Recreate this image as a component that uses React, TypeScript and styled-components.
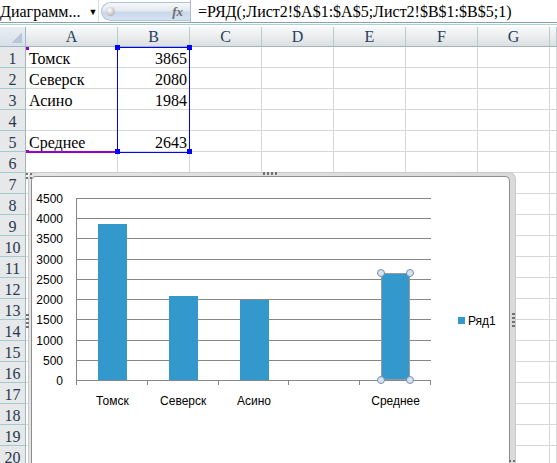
import styled, { createGlobalStyle } from 'styled-components';

const GlobalStyle = createGlobalStyle`
  html, body {
    margin: 0;
    padding: 0;
    background: #fff;
  }
  body {
    font-family: "Liberation Serif", "Times New Roman", serif;
    overflow: hidden;
  }
`;

const COLS = ['A', 'B', 'C', 'D', 'E', 'F', 'G'];
const ROWS = Array.from({ length: 20 }, (_, i) => i + 1);
const DATA: Record<number, [string, string]> = {
  1: ['Томск', '3865'],
  2: ['Северск', '2080'],
  3: ['Асино', '1984'],
  5: ['Среднее', '2643'],
};

const SERIES: { name: string; value: number | null }[] = [
  { name: 'Томск', value: 3865 },
  { name: 'Северск', value: 2080 },
  { name: 'Асино', value: 1984 },
  { name: '', value: null },
  { name: 'Среднее', value: 2643 },
];

// chart geometry, in page pixels
const X0 = 77;
const X1 = 431;
const Y0 = 380;
const YTOP = 198;
const MAX = 4500;
const BAR = 29;
const BLUE = '#3399cc';

export default function App() {
  return (
    <Root>
      <GlobalStyle />
      <FormulaBar>
        <NameBox>
          <span>Диаграмм...</span>
          <Arrow>▼</Arrow>
        </NameBox>
        <FxBox>
          <Knob />
          <Fx>fx</Fx>
        </FxBox>
        <Formula>=РЯД(;Лист2!$A$1:$A$5;Лист2!$B$1:$B$5;1)</Formula>
      </FormulaBar>
      <Divider />

      <Sheet>
        <Corner />
        {COLS.map((c) => (
          <ColHead key={c}>{c}</ColHead>
        ))}
        <ColHead />
        {ROWS.map((r) => (
          <Row key={r} r={r} />
        ))}
      </Sheet>

      {/* highlighted source ranges of the selected series */}
      <NameRange />
      <ValueRange />

      <ChartFrame>
        <ChartArea>
          <ColumnChart />
        </ChartArea>
        <SideGrip />
        <CornerGrip />
      </ChartFrame>
    </Root>
  );
}

function Row({ r }: { r: number }) {
  const d = DATA[r];
  return (
    <>
      <RowHead>{r}</RowHead>
      <Cell>{d ? d[0] : ''}</Cell>
      <Cell $right>{d ? d[1] : ''}</Cell>
      {COLS.slice(2).map((c) => (
        <Cell key={c} />
      ))}
      <Cell />
    </>
  );
}

function ColumnChart() {
  const y = (v: number) => Y0 - (v * (Y0 - YTOP)) / MAX;
  const cw = (X1 - X0) / SERIES.length;
  const ticks = Array.from({ length: 10 }, (_, i) => i * 500);
  const sel = SERIES[4].value as number;
  const selX = Math.round(X0 + 4.5 * cw - BAR / 2);
  const selTop = Math.round(y(sel));

  return (
    <ChartSvg>
      <g transform="translate(-32 -177)" fontFamily='"Liberation Sans", Arial, sans-serif' fontSize={12}>
        {ticks.map((v) => {
          const gy = Math.round(y(v)) + 0.5;
          return (
            <g key={v}>
              <line x1={X0} x2={X1} y1={gy} y2={gy} stroke="#868686" />
              <text x={63} y={gy + 4} textAnchor="end" fill="#000">
                {v}
              </text>
            </g>
          );
        })}
        <line x1={X0 - 0.5} x2={X0 - 0.5} y1={YTOP} y2={Y0 + 1} stroke="#868686" />
        {Array.from({ length: SERIES.length + 1 }, (_, i) => {
          const tx = Math.round(X0 + i * cw) - 0.5;
          return <line key={i} x1={tx} x2={tx} y1={Y0} y2={Y0 + 5} stroke="#868686" />;
        })}

        {SERIES.map((s, i) => {
          const cx = X0 + (i + 0.5) * cw;
          const bx = Math.round(cx - BAR / 2);
          return (
            <g key={i}>
              {s.value !== null && (
                <rect
                  x={bx}
                  y={Math.round(y(s.value))}
                  width={BAR}
                  height={Y0 - Math.round(y(s.value))}
                  fill={BLUE}
                />
              )}
              {s.name && (
                <text x={cx} y={405} textAnchor="middle" fill="#000">
                  {s.name}
                </text>
              )}
            </g>
          );
        })}

        {/* selected point: Среднее */}
        <rect x={selX + 0.5} y={selTop + 0.5} width={BAR - 1} height={Y0 - selTop - 1} fill="none" stroke="#9a9a9a" />
        {[
          [selX, selTop],
          [selX + BAR, selTop],
          [selX, Y0],
          [selX + BAR, Y0],
        ].map(([hx, hy], k) => (
          <circle key={k} cx={hx} cy={hy} r={3.5} fill="#d3e4ef" stroke="#7d8bb6" />
        ))}

        <rect x={458} y={317} width={7} height={7} fill={BLUE} />
        <text x={468} y={324.5} fill="#000">
          Ряд1
        </text>
      </g>
    </ChartSvg>
  );
}

const Root = styled.div`
  position: relative;
  width: 557px;
  height: 463px;
  overflow: hidden;
  background: #fff;
`;

const FormulaBar = styled.div`
  display: flex;
  height: 22px;
  border-bottom: 1px solid #7ea6ab;
  background: #fff;
  font-size: 16px;
  color: #000;
`;

const NameBox = styled.div`
  width: 99px;
  display: flex;
  align-items: flex-start;
  padding-top: 3px;
  line-height: 18px;
  box-sizing: border-box;
  border-right: 1px solid #d5dde6;
  white-space: nowrap;
  overflow: hidden;
`;

const Arrow = styled.span`
  margin-left: 8px;
  font-size: 9px;
  line-height: 18px;
  color: #000;
`;

const FxBox = styled.div`
  width: 89px;
  margin-left: 2px;
  margin-top: 2px;
  height: 19px;
  box-sizing: border-box;
  border: 1px solid #b3c3d6;
  border-right: none;
  border-radius: 10px 0 0 10px;
  background: linear-gradient(#f6f8fb 0%, #e4e9f0 45%, #c9d7ec 55%, #d7e3f3 100%);
  display: flex;
  align-items: center;
`;

const Knob = styled.div`
  width: 9px;
  height: 9px;
  margin-left: 4px;
  border-radius: 50%;
  background: radial-gradient(circle at 40% 35%, #ffffff 0%, #c4c4c4 60%, #9a9a9a 100%);
`;

const Fx = styled.span`
  margin-left: auto;
  margin-right: 7px;
  font-style: italic;
  font-weight: bold;
  font-size: 13px;
  color: #6d6d6d;
`;

const Formula = styled.div`
  flex: 1;
  border-left: 1px solid #a9bcd0;
  padding: 3px 0 0 7px;
  line-height: 18px;
  white-space: nowrap;
  overflow: hidden;
`;

const Divider = styled.div`
  height: 1px;
  border-top: 1px solid #fff;
  border-bottom: 2px solid #fff;
  background: #b2ced1;
`;

const Sheet = styled.div`
  display: grid;
  grid-template-columns: 26px 92px repeat(6, 72px) 1fr;
  grid-template-rows: 20px;
  grid-auto-rows: 21px;
  font-size: 16px;
`;

const Corner = styled.div`
  box-sizing: border-box;
  border-right: 1px solid #9fb7c9;
  border-bottom: 1px solid #9fb7c9;
  background:
    linear-gradient(135deg, transparent 55%, #b7c7d6 55%) no-repeat right 3px bottom 3px / 12px 12px,
    linear-gradient(#e9eef4, #d7dfe8);
`;

const ColHead = styled.div`
  box-sizing: border-box;
  border-right: 1px solid #b4cdd0;
  border-bottom: 1px solid #9fb6bb;
  background: linear-gradient(#f7f8f9 0%, #ebedee 50%, #dcdfe1 100%);
  color: #274060;
  display: flex;
  align-items: flex-end;
  justify-content: center;
  line-height: 17px;
  padding-bottom: 1px;
`;

const RowHead = styled.div`
  box-sizing: border-box;
  border-right: 1px solid #9eb5ba;
  border-bottom: 1px solid #a3cbcf;
  background: #e6e8e9;
  color: #26394f;
  display: flex;
  align-items: flex-end;
  justify-content: center;
  line-height: 17px;
`;

const Cell = styled.div<{ $right?: boolean }>`
  box-sizing: border-box;
  border-right: 1px solid #d8d8d8;
  border-bottom: 1px solid #d8d8d8;
  display: flex;
  align-items: flex-end;
  justify-content: ${(p) => (p.$right ? 'flex-end' : 'flex-start')};
  padding: 0 2px 0 3px;
  line-height: 17px;
  color: #000;
  white-space: nowrap;
`;

/* blue frame round B1:B5, with square handles drawn by one pseudo box + shadows */
const ValueRange = styled.div`
  position: absolute;
  left: 117px;
  top: 47px;
  width: 73px;
  height: 106px;
  box-sizing: border-box;
  border: 1px solid #0000ff;

  &::before {
    content: '';
    position: absolute;
    left: -3px;
    top: -3px;
    width: 5px;
    height: 5px;
    background: #0000ff;
    box-shadow: 72px 0 0 #0000ff, 0 104px 0 #0000ff, 72px 104px 0 #0000ff;
  }
`;

/* purple line under A1:A5 with its two corner marks */
const NameRange = styled.div`
  position: absolute;
  left: 26px;
  top: 151px;
  width: 91px;
  height: 2px;
  background: #9900cc;

  &::before {
    content: '';
    position: absolute;
    left: 0;
    top: -104px;
    width: 3px;
    height: 3px;
    background: #9900cc;
    box-shadow: 0 103px 0 #9900cc;
  }
`;

const ChartFrame = styled.div`
  position: absolute;
  left: 28px;
  top: 172px;
  width: 488px;
  height: 300px;
  box-sizing: border-box;
  padding: 3px 5px 0 2px;
  border: 1px solid #c9c9c9;
  border-bottom: none;
  border-radius: 7px 7px 0 0;
  background: linear-gradient(90deg, #e4e4e4, #dadada);

  /* top-middle grip */
  &::before {
    content: '';
    position: absolute;
    left: 234px;
    top: -1px;
    width: 16px;
    height: 3px;
    background: repeating-linear-gradient(90deg, #6f7378 0 2px, transparent 2px 4px);
  }
`;

const ChartArea = styled.div`
  height: 100%;
  box-sizing: border-box;
  background: #fff;
  border: 1px solid #8e8e8e;
  border-bottom: none;
  border-radius: 5px 5px 0 0;
  overflow: hidden;
`;

const ChartSvg = styled.svg`
  display: block;
  width: 100%;
  height: 100%;
`;

/* left and right side grips of the chart frame */
const SideGrip = styled.div`
  position: absolute;
  left: -3px;
  top: 141px;
  width: 3px;
  height: 15px;
  background: repeating-linear-gradient(180deg, #6f7378 0 2px, transparent 2px 4px);

  &::after {
    content: '';
    position: absolute;
    left: 486px;
    top: -1px;
    width: 3px;
    height: 15px;
    background: inherit;
  }
`;

/* top-left and bottom-right corner grips */
const CornerGrip = styled.div`
  position: absolute;
  left: -3px;
  top: 0;
  width: 6px;
  height: 6px;
  background:
    repeating-linear-gradient(90deg, #6f7378 0 2px, transparent 2px 4px) 0 0 / 6px 2px no-repeat,
    repeating-linear-gradient(90deg, #6f7378 0 2px, transparent 2px 4px) 0 4px / 6px 2px no-repeat;

  &::after {
    content: '';
    position: absolute;
    left: 483px;
    top: 287px;
    width: 6px;
    height: 6px;
    background: inherit;
  }
`;
